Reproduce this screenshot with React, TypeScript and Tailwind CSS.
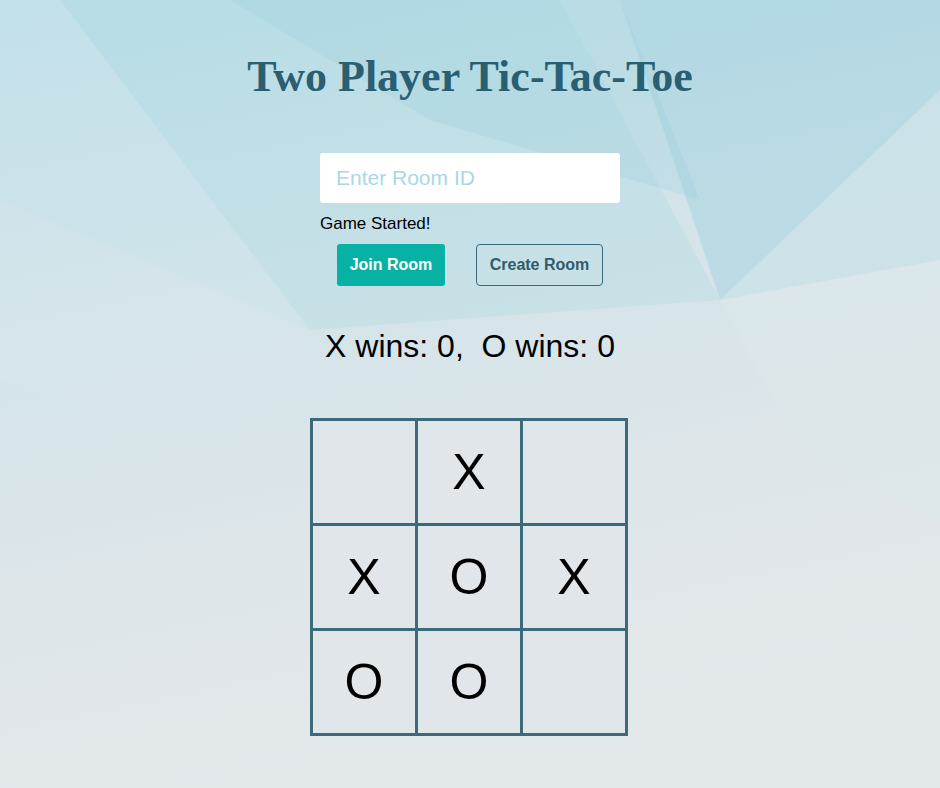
import React from "react";

const board = ["", "X", "", "X", "O", "X", "O", "O", ""];

const Background = () => (
  <svg
    className="absolute inset-0 h-full w-full"
    viewBox="0 0 940 788"
    preserveAspectRatio="none"
  >
    <defs>
      <linearGradient id="bg" x1="0" y1="0" x2="0.25" y2="1">
        <stop offset="0" stopColor="#bcdfe8" />
        <stop offset="0.4" stopColor="#d2e4ea" />
        <stop offset="0.75" stopColor="#dfe6e9" />
        <stop offset="1" stopColor="#e2e7ea" />
      </linearGradient>
    </defs>
    <rect width="940" height="788" fill="url(#bg)" />
    <polygon points="60,0 560,0 720,300 310,330" fill="#a9d6e2" opacity="0.3" />
    <polygon points="230,0 620,0 700,200 430,120" fill="#9fd1df" opacity="0.3" />
    <polygon points="620,0 940,0 940,90 720,300" fill="#95cddd" opacity="0.4" />
    <polygon points="720,300 940,90 940,260" fill="#c3e0e7" opacity="0.5" />
    <polygon points="0,0 60,0 310,330 0,200" fill="#cde4ea" opacity="0.4" />
    <polygon points="720,300 940,260 940,520 800,450" fill="#dce7eb" opacity="0.6" />
    <polygon points="0,200 310,330 230,440 0,380" fill="#d9e6ea" opacity="0.4" />
  </svg>
);

export default function App() {
  return (
    <div className="relative w-[940px] h-[788px] overflow-hidden font-['Liberation_Sans',Arial,sans-serif]">
      <Background />
      <div className="relative flex flex-col items-center">
        <h1 className="mt-[51px] text-[44px] leading-[52px] font-bold text-[#2a5f72] font-['Liberation_Serif','DejaVu_Serif',serif]">
          Two Player Tic-Tac-Toe
        </h1>
        <div className="mt-[50px] w-[300px]">
          <input
            className="w-full h-[50px] bg-white rounded-[3px] px-4 text-[21px] text-gray-800 outline-none placeholder:text-[#a9d7e6]"
            placeholder="Enter Room ID"
          />
          <div className="mt-[12px] text-[17px] leading-[18px] text-black">
            Game Started!
          </div>
          <div className="mt-[11px] flex gap-[31px] pl-[17px]">
            <button className="w-[108px] h-[42px] rounded-[3px] bg-[#07b1a3] text-white font-bold text-[16px]">
              Join Room
            </button>
            <button className="w-[127px] h-[42px] rounded-[4px] border border-[#3c6a7a] text-[#2f5c6c] font-bold text-[16px]">
              Create Room
            </button>
          </div>
        </div>
        <div className="mt-[40px] text-[32px] leading-[40px] text-black whitespace-pre">
          {"X wins: 0,  O wins: 0"}
        </div>
        <div className="mt-[52px] mr-[2px] grid grid-cols-3 gap-[3px] p-[3px] bg-[#3b6a7a]">
          {board.map((v, i) => (
            <div
              key={i}
              className="w-[102px] h-[102px] bg-[#e0e6e9] flex items-center justify-center text-[50px] text-black"
            >
              {v}
            </div>
          ))}
        </div>
      </div>
    </div>
  );
}
